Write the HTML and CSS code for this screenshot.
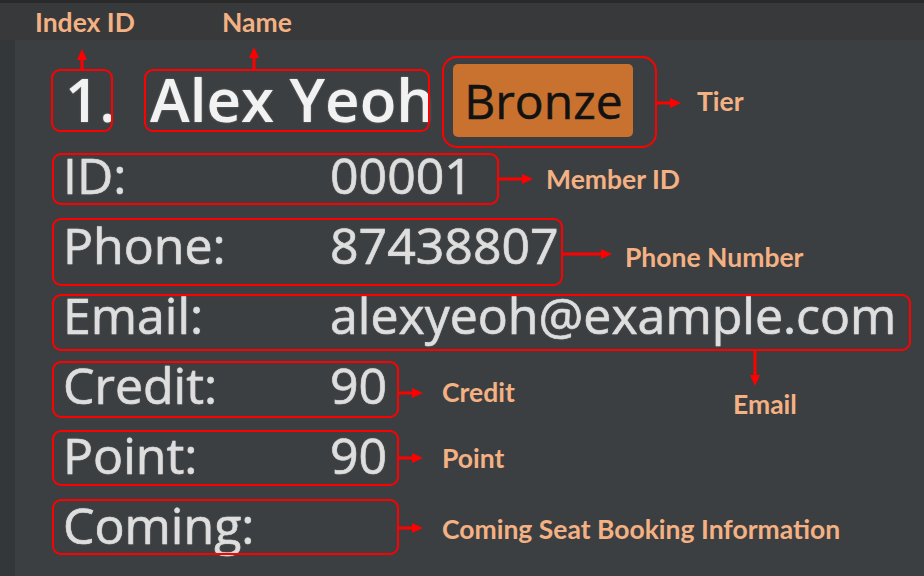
FILE: index.html
```html
<!DOCTYPE html>
<html lang="en">
<head>
<meta charset="utf-8">
<title>Member card</title>
<link rel="stylesheet" href="styles.css">
</head>
<body>
<div class="topbar"></div>
<div class="headstrip"></div>
<div class="frame">
  <div class="gutter"></div>
  <div class="card">
    <div class="header">
      <span class="index">1.</span>
      <span class="name">Alex Yeoh</span>
      <span class="tier">Bronze</span>
    </div>
    <div class="fields">
      <div class="field"><span class="key">ID:</span><span class="val">00001</span></div>
      <div class="field"><span class="key">Phone:</span><span class="val">87438807</span></div>
      <div class="field"><span class="key">Email:</span><span class="val">alexyeoh@example.com</span></div>
      <div class="field"><span class="key">Credit:</span><span class="val">90</span></div>
      <div class="field"><span class="key">Point:</span><span class="val">90</span></div>
      <div class="field"><span class="key">Coming:</span><span class="val"></span></div>
    </div>
  </div>
</div>

<div class="annotations">
  <svg class="marks" width="924" height="576" viewBox="0 0 924 576">
    <g fill="none" stroke="#ff0000" stroke-width="2">
      <rect x="52" y="70" width="60" height="61" rx="8"/>
      <rect x="145" y="70" width="284" height="61" rx="8"/>
      <rect x="443" y="57" width="213" height="90" rx="14"/>
      <rect x="53" y="154" width="445" height="50" rx="8"/>
      <rect x="53" y="219" width="509" height="66" rx="8"/>
      <rect x="53" y="295" width="857" height="55" rx="8"/>
      <rect x="53" y="362" width="345" height="55" rx="8"/>
      <rect x="53" y="431" width="345" height="54" rx="8"/>
      <rect x="53" y="500" width="345" height="54" rx="8"/>
    </g>
    <g stroke="#ff0000" stroke-width="3">
      <line x1="82" y1="69" x2="82" y2="58"/>
      <line x1="254" y1="69" x2="254" y2="56"/>
      <line x1="657" y1="103" x2="671" y2="103"/>
      <line x1="499" y1="179" x2="523" y2="179"/>
      <line x1="563" y1="254" x2="602" y2="254"/>
      <line x1="755" y1="351" x2="755" y2="376"/>
      <line x1="399" y1="393" x2="413" y2="393"/>
      <line x1="399" y1="458" x2="413" y2="458"/>
      <line x1="399" y1="528" x2="413" y2="528"/>
    </g>
    <g fill="#ff0000">
      <polygon points="82,49 77,60 87,60"/>
      <polygon points="254,47 249,58 259,58"/>
      <polygon points="681,103 670,98 670,108"/>
      <polygon points="533,179 522,174 522,184"/>
      <polygon points="612,254 601,249 601,259"/>
      <polygon points="755,386 750,375 760,375"/>
      <polygon points="423,393 412,388 412,398"/>
      <polygon points="423,458 412,453 412,463"/>
      <polygon points="423,528 412,523 412,533"/>
    </g>
  </svg>
  <span class="tag tag-index">Index ID</span>
  <span class="tag tag-name">Name</span>
  <span class="tag tag-tier">Tier</span>
  <span class="tag tag-member">Member ID</span>
  <span class="tag tag-phone">Phone Number</span>
  <span class="tag tag-email">Email</span>
  <span class="tag tag-credit">Credit</span>
  <span class="tag tag-point">Point</span>
  <span class="tag tag-coming">Coming Seat Booking Information</span>
</div>
</body>
</html>
```

FILE: styles.css
```css
html, body {
  margin: 0;
  padding: 0;
}

body {
  width: 924px;
  height: 576px;
  overflow: hidden;
  background: #38393a;
  font-family: "Open Sans", "DejaVu Sans", sans-serif;
  position: relative;
}

.topbar {
  height: 3px;
  background: #2a2a2b;
}

.headstrip {
  height: 37px;
  background: #38393a;
}

.frame {
  display: flex;
  height: 536px;
}

.gutter {
  width: 15px;
  background: #343739;
}

.card {
  flex: 1;
  background: #3c3f41;
  padding: 24px 0 0 48px;
}

.header {
  display: flex;
  align-items: center;
  height: 73px;
  margin-bottom: 3px;
}

.index {
  font-size: 60px;
  font-weight: 600;
  color: #f2f2f2;
  line-height: 1;
  width: 85px;
  margin-left: 2px;
  margin-top: -4px;
  text-shadow: 0 0 2px rgba(255, 255, 255, 0.35);
}

.name {
  font-size: 60px;
  font-weight: 600;
  color: #f2f2f2;
  line-height: 1;
  margin-right: 19px;
  margin-top: -4px;
  text-shadow: 0 0 2px rgba(255, 255, 255, 0.35);
}

.tier {
  display: flex;
  align-items: center;
  justify-content: center;
  width: 180px;
  height: 73px;
  background: #c9722f;
  border-radius: 5px;
  color: #121212;
  font-size: 48px;
  font-weight: 500;
  line-height: 1;
  -webkit-text-stroke: 0.5px #121212;
}

.fields {
  display: flex;
  flex-direction: column;
}

.field {
  display: flex;
  height: 70px;
  line-height: 70px;
  font-size: 50px;
  font-weight: 500;
  color: #dedede;
  white-space: nowrap;
  -webkit-text-stroke: 0.6px #dedede;
  text-shadow: 0 0 2px rgba(255, 255, 255, 0.3);
}

.key {
  width: 267px;
  flex: none;
}

.annotations {
  position: absolute;
  left: 0;
  top: 0;
  width: 924px;
  height: 576px;
}

.marks {
  position: absolute;
  left: 0;
  top: 0;
}

.tag {
  position: absolute;
  font-family: Lato, "Liberation Sans", sans-serif;
  font-weight: 700;
  font-size: 26.5px;
  line-height: 26px;
  color: #f4b183;
  white-space: nowrap;
}

.tag-index { left: 35px; top: 9px; }
.tag-name { left: 222px; top: 9px; }
.tag-tier { left: 697px; top: 88px; }
.tag-member { left: 546px; top: 166px; }
.tag-phone { left: 625px; top: 244px; }
.tag-email { left: 733px; top: 391px; }
.tag-credit { left: 442px; top: 379px; }
.tag-point { left: 442px; top: 445px; }
.tag-coming { left: 442px; top: 516px; }
```
